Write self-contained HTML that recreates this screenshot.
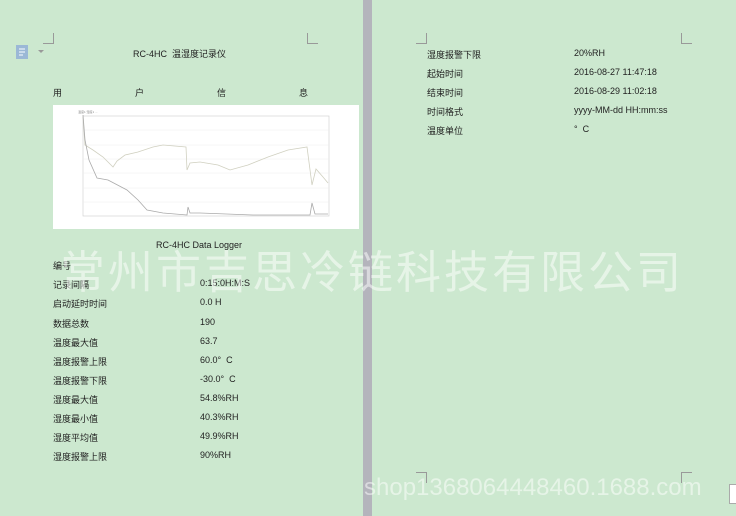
<!DOCTYPE html>
<html><head><meta charset="utf-8"><style>
body{margin:0;width:736px;height:516px;background:#cce8cf;position:relative;overflow:hidden;font-family:"Liberation Sans","Noto Sans CJK SC",sans-serif;color:#222;}
.t{position:absolute;font-size:9px;white-space:nowrap;}
.bar{position:absolute;left:363px;top:0;width:9px;height:516px;background:#b4b4bc;}
.c{position:absolute;width:10px;height:10px;border-color:#999;border-style:solid;border-width:0;}
.wm{position:absolute;color:rgba(255,255,255,0.5);white-space:nowrap;font-family:"Liberation Sans","Noto Sans CJK SC",sans-serif;}
</style></head><body>
<div class="bar"></div>
<div class="c" style="left:43px;top:33px;border-right-width:1px;border-bottom-width:1px"></div>
<div class="c" style="left:307px;top:33px;border-left-width:1px;border-bottom-width:1px"></div>
<div class="c" style="left:416px;top:33px;border-right-width:1px;border-bottom-width:1px"></div>
<div class="c" style="left:681px;top:33px;border-left-width:1px;border-bottom-width:1px"></div>
<div class="c" style="left:416px;top:472px;border-right-width:1px;border-top-width:1px"></div>
<div class="c" style="left:681px;top:472px;border-left-width:1px;border-top-width:1px"></div>
<svg style="position:absolute;left:16px;top:45px" width="28" height="14"><rect x="0" y="0" width="12" height="14" fill="#9bb8d6"/><path d="M3 4h6M3 7h6M3 10h4" stroke="#e8f0f8" stroke-width="1.2"/><path d="M22 5l3 3 3-3z" fill="#999"/></svg>
<div class="t" style="left:133px;top:47px">RC-4HC &nbsp;温湿度记录仪</div>
<div class="t" style="left:53px;top:86px">用</div>
<div class="t" style="left:135px;top:86px">户</div>
<div class="t" style="left:217px;top:86px">信</div>
<div class="t" style="left:299px;top:86px">息</div>
<svg style="position:absolute;left:53px;top:105px" width="306" height="124"><rect width="306" height="124" fill="#fff"/>
<rect x="30" y="11" width="246" height="100" fill="none" stroke="#ccc" stroke-width="0.6"/>
<g stroke="#eee" stroke-width="0.5"><path d="M30 25h246M30 40h246M30 54h246M30 68h246M30 83h246M30 97h246"/></g>
<path d="M30 12L32 40 40 45 50 52 58 60 60 62 64 56 72 50 85 47 100 42 110 40 133 42 134 65 137 58 147 57 165 60 177 65 195 60 215 52 235 45 254 42 259 80 263 64 270 72 275 78" fill="none" stroke="#d0d0c0" stroke-width="0.8"/>
<path d="M30 10L32 35 36 55 44 73 55 75 74 85 85 95 94 105 110 108 134 110 135 102 137 108 147 108 200 110 257 110 259 98 262 109 275 109" fill="none" stroke="#aaa" stroke-width="0.8"/>
<g font-size="3" fill="#888"><text x="25" y="8">温度1 湿度1 ...</text></g>
</svg>
<div class="t" style="left:156px;top:240px">RC-4HC Data Logger</div>
<div class="t" style="left:53px;top:259px">编号</div>
<div class="t" style="left:53px;top:278px">记录间隔</div><div class="t" style="left:200px;top:278px">0:15:0H:M:S</div>
<div class="t" style="left:53px;top:297px">启动延时时间</div><div class="t" style="left:200px;top:297px">0.0 H</div>
<div class="t" style="left:53px;top:317px">数据总数</div><div class="t" style="left:200px;top:317px">190</div>
<div class="t" style="left:53px;top:336px">温度最大值</div><div class="t" style="left:200px;top:336px">63.7</div>
<div class="t" style="left:53px;top:355px">温度报警上限</div><div class="t" style="left:200px;top:355px">60.0°&nbsp; C</div>
<div class="t" style="left:53px;top:374px">温度报警下限</div><div class="t" style="left:200px;top:374px">-30.0°&nbsp; C</div>
<div class="t" style="left:53px;top:393px">湿度最大值</div><div class="t" style="left:200px;top:393px">54.8%RH</div>
<div class="t" style="left:53px;top:412px">湿度最小值</div><div class="t" style="left:200px;top:412px">40.3%RH</div>
<div class="t" style="left:53px;top:431px">湿度平均值</div><div class="t" style="left:200px;top:431px">49.9%RH</div>
<div class="t" style="left:53px;top:450px">湿度报警上限</div><div class="t" style="left:200px;top:450px">90%RH</div>
<div class="t" style="left:427px;top:48px">湿度报警下限</div><div class="t" style="left:574px;top:48px">20%RH</div>
<div class="t" style="left:427px;top:67px">起始时间</div><div class="t" style="left:574px;top:67px">2016-08-27 11:47:18</div>
<div class="t" style="left:427px;top:86px">结束时间</div><div class="t" style="left:574px;top:86px">2016-08-29 11:02:18</div>
<div class="t" style="left:427px;top:105px">时间格式</div><div class="t" style="left:574px;top:105px">yyyy-MM-dd HH:mm:ss</div>
<div class="t" style="left:427px;top:124px">温度单位</div><div class="t" style="left:574px;top:124px">°&nbsp; C</div>
<div class="wm" style="left:60px;top:236px;font-size:45px;letter-spacing:3px">常州市吉思冷链科技有限公司</div>
<div class="wm" style="left:364px;top:474px;font-size:24px">shop1368064448460.1688.com</div>
<div style="position:absolute;left:729px;top:484px;width:10px;height:18px;background:#fff;border:1px solid #aaa"></div>
</body></html>
